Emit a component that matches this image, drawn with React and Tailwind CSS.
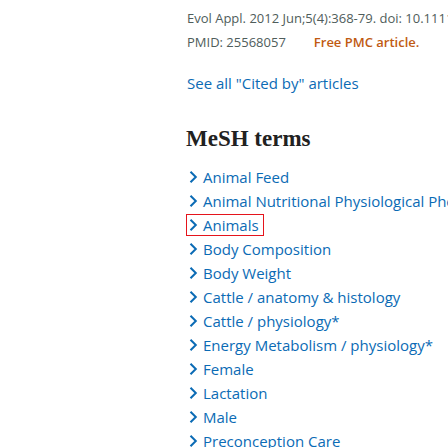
import React from 'react';

const terms = [
  'Animal Feed',
  'Animal Nutritional Physiological Phenomena',
  'Animals',
  'Body Composition',
  'Body Weight',
  'Cattle / anatomy & histology',
  'Cattle / physiology*',
  'Energy Metabolism / physiology*',
  'Female',
  'Lactation',
  'Male',
  'Preconception Care',
  'Pregnancy',
];

function Chevron() {
  return (
    <svg width="10" height="14" viewBox="0 0 10 14" className="shrink-0">
      <path d="M2.5 1.8 L7.8 7 L2.5 12.2" fill="none" stroke="#0b6bb5" strokeWidth="2" />
    </svg>
  );
}

export default function App() {
  return (
    <div
      className="w-[448px] h-[448px] overflow-hidden bg-white pl-[186px] whitespace-nowrap"
      style={{ fontFamily: '"Open Sans", "Noto Sans", sans-serif' }}
    >
      {/* citation meta */}
      <div className="pt-[6px] pl-px text-[13px] leading-6 text-[#4f5d5b]">
        <div>Evol Appl. 2012 Jun;5(4):368-79. doi: 10.1111/j.1752-4571.2012.00234.x.</div>
        <div className="flex">
          <span>PMID: 25568057</span>
          <span className="ml-[28px] font-semibold text-[#c05a12]">Free PMC article.</span>
        </div>
      </div>

      <div className="mt-[17px] pl-px text-[15px] leading-6 text-[#0b6bb5]">
        See all "Cited by" articles
      </div>

      {/* MeSH terms */}
      <h2
        className="mt-[28px] text-[23px] leading-8 font-bold text-[#212121]"
        style={{ fontFamily: '"Liberation Serif", serif' }}
      >
        MeSH terms
      </h2>

      <ul className="mt-[10px]">
        {terms.map((t) => (
          <li key={t} className="h-6 flex items-center">
            <span
              className={
                'inline-flex items-center h-[22px] border pl-px pr-[4px] gap-[5px] text-[15px] text-[#0b6bb5] ' +
                (t === 'Animals' ? 'border-[#e5141c]' : 'border-transparent')
              }
            >
              <Chevron />
              {t}
            </span>
          </li>
        ))}
      </ul>
    </div>
  );
}
